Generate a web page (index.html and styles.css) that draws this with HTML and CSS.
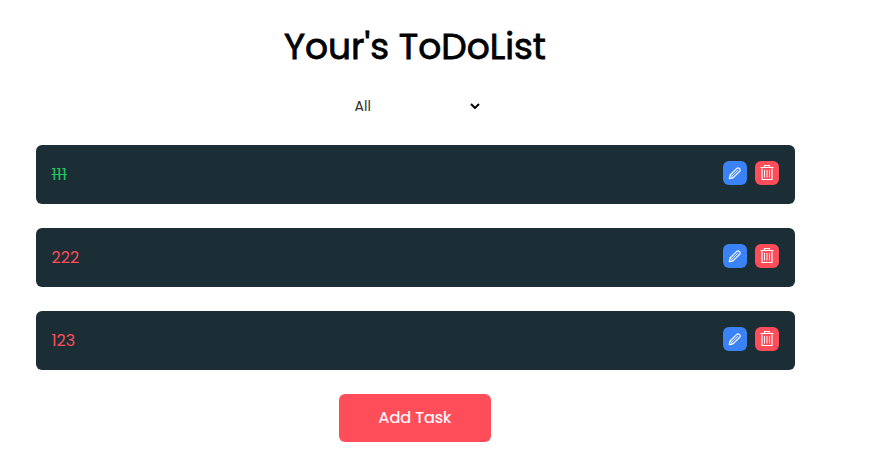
FILE: index.html
```html
<!DOCTYPE html>
<html lang="en">
<head>
<meta charset="utf-8">
<title>ToDoList</title>
<link rel="stylesheet" href="styles.css">
</head>
<body>
<svg class="defs" width="0" height="0">
  <symbol id="pencil" viewBox="0 0 16 16"><path d="M2.300 13.700l.8-3.700L9.800 3.300a1.600 1.600 0 0 1 2.300 0l.6.600a1.600 1.600 0 0 1 0 2.300L6 12.900z"/><path class="thin" d="M5 11l6-6M3.200 10l2.800 2.800"/></symbol>
  <symbol id="trash" viewBox="0 0 16 16"><path d="M5.500 2.500V.500h5v2M1.500 2.500h13"/><path d="M3 3.500v11h10v-11"/><path class="thin" d="M5.500 5v7.500M8 5v7.500M10.500 5v7.500"/></symbol>
</svg>
<main class="app">
  <h1 class="title"><span>Your's ToDoList</span></h1>
  <button class="filter"><span>All</span><svg width="10" height="6" viewBox="0 0 10 6"><path d="M1 1l4 4 4-4"/></svg></button>
  <ul class="list">
    <li class="task"><span class="name done">111</span><button class="icon edit" aria-label="Edit"><svg><use href="#pencil"/></svg></button><button class="icon delete" aria-label="Delete"><svg><use href="#trash"/></svg></button></li>
    <li class="task"><span class="name">222</span><button class="icon edit" aria-label="Edit"><svg><use href="#pencil"/></svg></button><button class="icon delete" aria-label="Delete"><svg><use href="#trash"/></svg></button></li>
    <li class="task"><span class="name">123</span><button class="icon edit" aria-label="Edit"><svg><use href="#pencil"/></svg></button><button class="icon delete" aria-label="Delete"><svg><use href="#trash"/></svg></button></li>
  </ul>
  <button class="add"><span>Add Task</span></button>
</main>
</body>
</html>
```
FILE: styles.css
```css
* { box-sizing: border-box; margin: 0; padding: 0; }
body { background: #fff; font-family: Poppins, Lato, sans-serif; overflow: hidden; }
button { border: 0; background: none; font-family: inherit; }
.defs { display: block; }
.app { width: 759px; margin-left: 35.5px; padding-top: 16px; display: flex; flex-direction: column; align-items: center; }
.title { height: 60px; line-height: 61px; font-size: 36px; font-weight: 400; -webkit-text-stroke: 0.8px #000; color: #000; white-space: nowrap; }
.filter { width: 137px; height: 24px; margin-top: 18px; padding: 0 4px 0 8px; display: flex; align-items: center; justify-content: space-between; font-size: 14px; color: #333; }
.filter svg { fill: none; stroke: #000; stroke-width: 2; }
.list { width: 100%; margin-top: 27px; display: flex; flex-direction: column; gap: 24px; list-style: none; }
.task { height: 59px; padding: 16px; display: flex; gap: 8px; background: #1b2e35; border-radius: 6px; }
.name { flex: 1; line-height: 27px; font-size: 16px; color: #ff4d5a; }
.done { color: #22c55e; text-decoration: line-through; }
.icon { width: 24px; height: 24px; display: grid; place-items: center; border-radius: 6px; }
.icon svg { width: 16px; height: 16px; fill: none; stroke: #fff; stroke-width: 1.2; stroke-linejoin: round; }
.thin { stroke-width: 0.9; }
.edit { background: #3b82f6; }
.delete { background: #ff4d5a; }
.add { width: 152px; height: 48px; margin-top: 24px; padding-bottom: 2px; border-radius: 6px; background: #ff4d5a; color: #fff; font-size: 16px; font-weight: 400; -webkit-text-stroke: 0.2px #fff; }
```
